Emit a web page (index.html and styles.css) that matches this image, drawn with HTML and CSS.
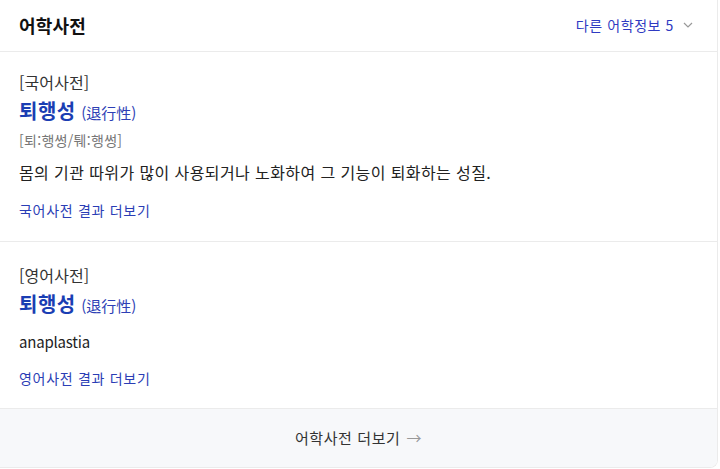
FILE: index.html
```html
<!DOCTYPE html>
<html lang="ko">
<head>
<meta charset="utf-8">
<link rel="stylesheet" href="styles.css">
</head>
<body>
<div class="card">
  <div class="head">
    <h2 class="title">어학사전</h2>
    <div class="more">다른 어학정보 5
      <svg class="chev" width="10" height="6" viewBox="0 0 10 6"><path d="M1 1l4 4 4-4" fill="none" stroke="#999" stroke-width="1.2"/></svg>
    </div>
  </div>
  <div class="sec">
    <div class="cat">[국어사전]</div>
    <div class="word"><span class="w">퇴행성</span> <span class="han">(退行性)</span></div>
    <div class="pron">[퇴:행썽/퉤:행썽]</div>
    <div class="def">몸의 기관 따위가 많이 사용되거나 노화하여 그 기능이 퇴화하는 성질.</div>
    <div class="link">국어사전 결과 더보기</div>
  </div>
  <div class="sec">
    <div class="cat">[영어사전]</div>
    <div class="word"><span class="w">퇴행성</span> <span class="han">(退行性)</span></div>
    <div class="def en">anaplastia</div>
    <div class="link">영어사전 결과 더보기</div>
  </div>
  <div class="foot">어학사전 더보기 <span class="arr">→</span></div>
</div>
</body>
</html>
```
FILE: styles.css
```css
html, body { margin: 0; padding: 0; background: #fff; }
body { font-family: "Noto Sans CJK KR", "Noto Sans", sans-serif; color: #222; }
.card {
  width: 718px;
  height: 468px;
  box-sizing: border-box;
  border-right: 1px solid #ebebeb;
  border-bottom: 1px solid #ebebeb;
  border-bottom-right-radius: 8px;
  overflow: hidden;
  display: flex;
  flex-direction: column;
}
.head {
  height: 52px;
  box-sizing: border-box;
  border-bottom: 1px solid #ebebeb;
  display: flex;
  align-items: center;
  justify-content: space-between;
  padding: 0 24px 0 19px;
}
.title { margin: 0; font-size: 18px; font-weight: 700; color: #111; letter-spacing: 0.2px; margin-top: -2px; }
.more { font-size: 14px; color: #2f3ac2; display: flex; align-items: center; gap: 9px; margin-top: -2px; letter-spacing: 0.6px; }
.chev { display: block; }
.sec {
  padding: 19px 19px 0;
  border-bottom: 1px solid #ebebeb;
}
.sec:nth-of-type(2) { height: 190px; box-sizing: border-box; }
.sec:nth-of-type(3) { height: 167px; box-sizing: border-box; padding-top: 22px; }
.cat { font-size: 16px; color: #333; line-height: 22px; letter-spacing: 0.1px; }
.word { margin-top: 4px; line-height: 28px; }
.w { font-size: 20px; font-weight: 700; color: #1a3eb3; letter-spacing: 0.5px; }
.han { font-size: 15px; color: #2e3fb5; margin-left: 1px; }
.pron { font-size: 14px; color: #777; line-height: 20px; margin-top: 3px; letter-spacing: 0.3px; }
.def { font-size: 16px; color: #222; line-height: 22px; margin-top: 11px; letter-spacing: 0.4px; }
.def.en { margin-top: 11px; font-size: 15px; letter-spacing: -0.2px; }
.link { font-size: 14px; color: #2a3db5; margin-top: 17px; line-height: 20px; letter-spacing: 0.7px; }
.def.en + .link { margin-top: 15px; }
.foot {
  flex: 1;
  background: #f7f8fa;
  display: flex;
  align-items: center;
  justify-content: center;
  font-size: 15px;
  color: #333;
  padding-bottom: 2px;
  letter-spacing: 0.6px;
}
.arr { color: #999; margin-left: 6px; font-size: 15px; }
```
